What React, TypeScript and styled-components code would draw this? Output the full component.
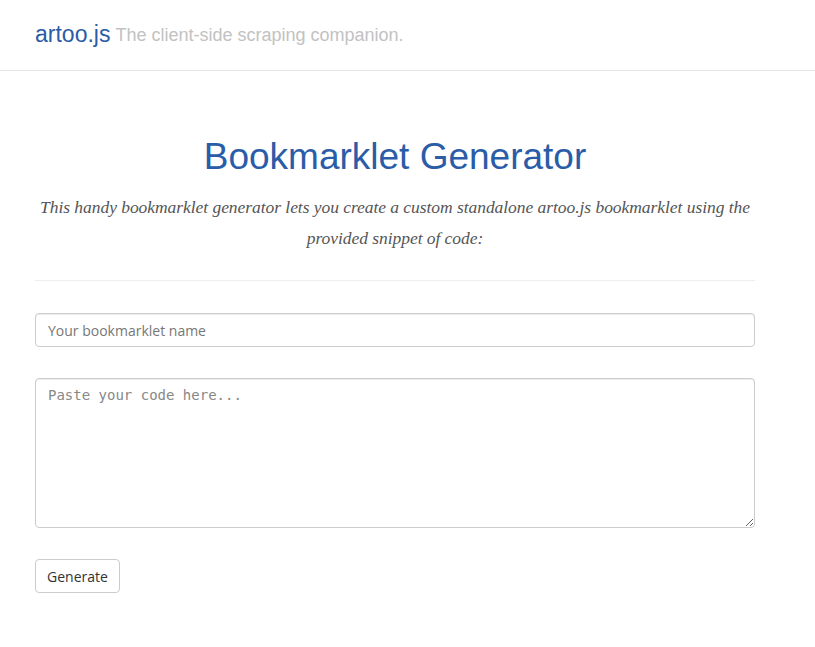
import React from "react";
import styled, { createGlobalStyle } from "styled-components";

const Global = createGlobalStyle`
  html, body { margin: 0; padding: 0; background: #fff; }
  body { font-family: "Open Sans", "Liberation Sans", sans-serif; color: #333; }
  * { box-sizing: border-box; }
`;

const Header = styled.header`
  height: 71px;
  border-bottom: 1px solid #e7e7e7;
  display: flex;
  align-items: center;
  padding: 0 35px;
`;

const Brand = styled.a`
  font-family: "Liberation Sans", sans-serif;
  font-size: 23px;
  color: #2a5ca8;
  text-decoration: none;
  margin-top: -2px;
`;

const Tagline = styled.span`
  font-family: "Liberation Sans", sans-serif;
  font-size: 18px;
  color: #c2c2c2;
  margin-left: 5px;
`;

const Main = styled.main`
  width: 720px;
  margin-left: 35px;
  display: flex;
  flex-direction: column;
`;

const Title = styled.h1`
  font-family: "Liberation Sans", sans-serif;
  font-weight: 400;
  font-size: 37px;
  line-height: 44px;
  color: #2a5ca8;
  text-align: center;
  margin: 64px 0 0;
`;

const Lead = styled.p`
  font-family: "Liberation Serif", serif;
  font-style: italic;
  font-size: 17.5px;
  letter-spacing: -0.05px;
  line-height: 31px;
  color: #555;
  text-align: center;
  margin: 13px 0 0;
`;

const Rule = styled.hr`
  border: 0;
  border-top: 1px solid #eee;
  margin: 26px 0 32px;
  width: 100%;
`;

const Field = styled.input`
  height: 34px;
  width: 100%;
  border: 1px solid #ccc;
  border-radius: 4px;
  padding: 6px 12px;
  font-family: "Open Sans", sans-serif;
  font-size: 14px;
  color: #555;
  box-shadow: inset 0 1px 1px rgba(0,0,0,.075);
  &::placeholder { color: #777; }
`;

const Code = styled.textarea`
  height: 150px;
  width: 100%;
  margin-top: 31px;
  border: 1px solid #ccc;
  border-radius: 4px;
  padding: 6px 12px;
  font-family: "DejaVu Sans Mono", monospace;
  font-size: 14px;
  line-height: 20px;
  color: #555;
  resize: vertical;
  box-shadow: inset 0 1px 1px rgba(0,0,0,.075);
  &::placeholder { color: #888; }
`;

const Button = styled.button`
  align-self: flex-start;
  margin-top: 31px;
  height: 34px;
  padding: 6px 11px;
  background: #fff;
  border: 1px solid #ccc;
  border-radius: 4px;
  font-family: "Open Sans", sans-serif;
  font-size: 14px;
  color: #333;
`;

export default function App() {
  return (
    <>
      <Global />
      <Header>
        <Brand href="#">artoo.js</Brand>
        <Tagline>The client-side scraping companion.</Tagline>
      </Header>
      <Main>
        <Title>Bookmarklet Generator</Title>
        <Lead>
          This handy bookmarklet generator lets you create a custom standalone artoo.js bookmarklet using the provided snippet of code:
        </Lead>
        <Rule />
        <Field placeholder="Your bookmarklet name" />
        <Code placeholder="Paste your code here..." />
        <Button>Generate</Button>
      </Main>
    </>
  );
}
